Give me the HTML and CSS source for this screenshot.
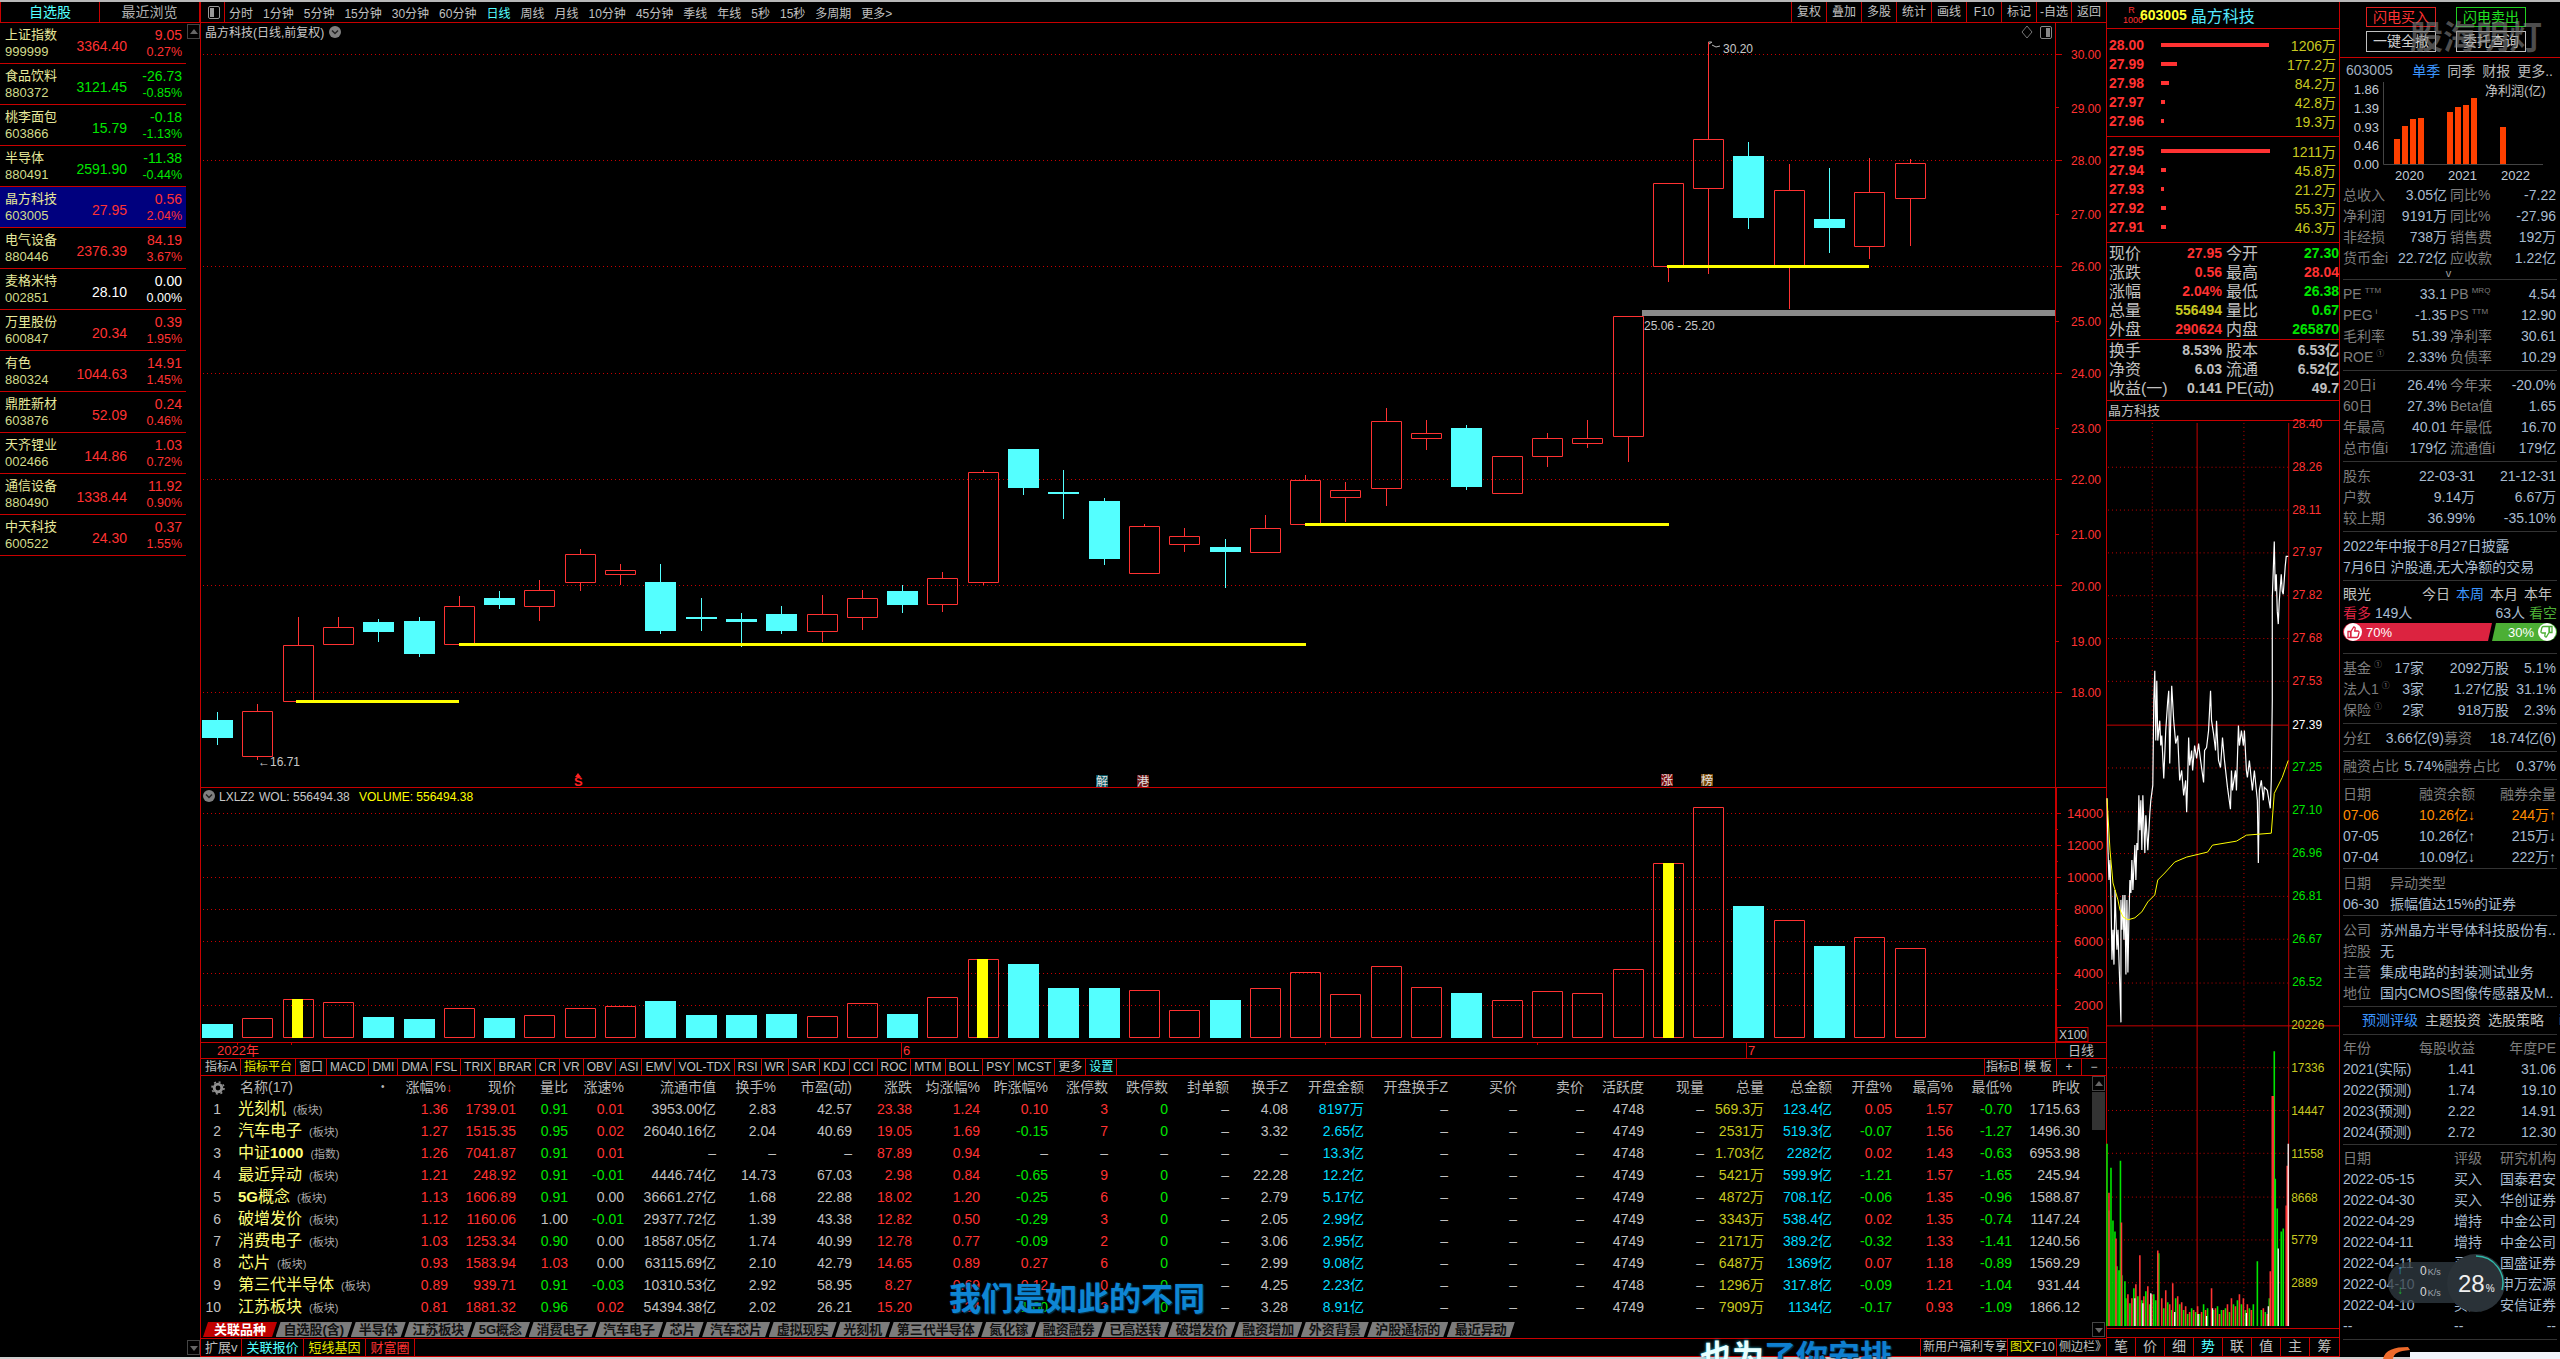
FILE: index.html
```html
<!DOCTYPE html>
<html lang="zh-CN">
<head>
<meta charset="utf-8">
<title>晶方科技</title>
<link rel="stylesheet" href="styles.css">
</head>
<body>
<div class="app">
  <div class="topline"></div>
  <div class="shell">
    <aside class="side">
      <div class="side-tabs"><div class="side-tab on">自选股</div><div class="side-tab">最近浏览</div></div>
      <div class="side-body">
        <div class="side-list">
          <div class="srow"><span class="nm">上证指数</span><span class="pr r">3364.40</span><span class="ch r">9.05</span><span class="cd">999999</span><span class="pc r">0.27%</span></div>
          <div class="srow"><span class="nm">食品饮料</span><span class="pr g">3121.45</span><span class="ch g">-26.73</span><span class="cd">880372</span><span class="pc g">-0.85%</span></div>
          <div class="srow"><span class="nm">桃李面包</span><span class="pr g">15.79</span><span class="ch g">-0.18</span><span class="cd">603866</span><span class="pc g">-1.13%</span></div>
          <div class="srow"><span class="nm">半导体</span><span class="pr g">2591.90</span><span class="ch g">-11.38</span><span class="cd">880491</span><span class="pc g">-0.44%</span></div>
          <div class="srow sel"><span class="nm">晶方科技</span><span class="pr r">27.95</span><span class="ch r">0.56</span><span class="cd">603005</span><span class="pc r">2.04%</span></div>
          <div class="srow"><span class="nm">电气设备</span><span class="pr r">2376.39</span><span class="ch r">84.19</span><span class="cd">880446</span><span class="pc r">3.67%</span></div>
          <div class="srow"><span class="nm">麦格米特</span><span class="pr wh">28.10</span><span class="ch wh">0.00</span><span class="cd">002851</span><span class="pc wh">0.00%</span></div>
          <div class="srow"><span class="nm">万里股份</span><span class="pr r">20.34</span><span class="ch r">0.39</span><span class="cd">600847</span><span class="pc r">1.95%</span></div>
          <div class="srow"><span class="nm">有色</span><span class="pr r">1044.63</span><span class="ch r">14.91</span><span class="cd">880324</span><span class="pc r">1.45%</span></div>
          <div class="srow"><span class="nm">鼎胜新材</span><span class="pr r">52.09</span><span class="ch r">0.24</span><span class="cd">603876</span><span class="pc r">0.46%</span></div>
          <div class="srow"><span class="nm">天齐锂业</span><span class="pr r">144.86</span><span class="ch r">1.03</span><span class="cd">002466</span><span class="pc r">0.72%</span></div>
          <div class="srow"><span class="nm">通信设备</span><span class="pr r">1338.44</span><span class="ch r">11.92</span><span class="cd">880490</span><span class="pc r">0.90%</span></div>
          <div class="srow"><span class="nm">中天科技</span><span class="pr r">24.30</span><span class="ch r">0.37</span><span class="cd">600522</span><span class="pc r">1.55%</span></div>
        </div>
        <div class="side-scroll"><div class="sbtn up"></div></div>
      </div>
    </aside>

    <main class="center">
      <nav class="tools">
        <div class="panel-ico"><svg width="12" height="13" viewBox="0 0 12 13"><rect x=".5" y=".5" width="11" height="12" rx="1.5" fill="none" stroke="#9a9a9a"/><rect x="2" y="2" width="4" height="9" fill="#9a9a9a"/></svg></div>
        <div class="periods"><span>分时</span><span>1分钟</span><span>5分钟</span><span>15分钟</span><span>30分钟</span><span>60分钟</span><span class="cy">日线</span><span>周线</span><span>月线</span><span>10分钟</span><span>45分钟</span><span>季线</span><span>年线</span><span>5秒</span><span>15秒</span><span>多周期</span><span>更多&gt;</span></div>
        <div class="actions"><span>复权</span><span>叠加</span><span>多股</span><span>统计</span><span>画线</span><span>F10</span><span>标记</span><span>-自选</span><span>返回</span></div>
      </nav>

      <svg class="kline" viewBox="201 23 1905 764">
        <path class="dot" d="M203 54.5H2055M203 160.5H2055M203 266.5H2055M203 373.5H2055M203 479.5H2055M203 585.5H2055M203 692.5H2055"/>
        <path class="axis" d="M2055.5 23V787M2055 54.5h7M2055 107.5h4M2055 160.5h7M2055 214.5h4M2055 266.5h7M2055 321.5h4M2055 373.5h7M2055 428.5h4M2055 479.5h7M2055 534.5h4M2055 585.5h7M2055 641.5h4M2055 692.5h7"/>
        <text class="lab" x="205" y="37">晶方科技(日线,前复权)</text>
        <circle cx="335" cy="32" r="6" fill="#808080"/><path d="M332 30.500l3 3 3-3" fill="none" stroke="#222" stroke-width="1.500"/>
        <path d="M2027 26l5 6-5 6-5-6z" fill="none" stroke="#777"/>
        <rect x="2040.500" y="26.500" width="11" height="12" rx="1.500" fill="none" stroke="#888"/><rect x="2046" y="28" width="4" height="9" fill="#888"/>
        <g class="ax">
          <text x="2071" y="59">30.00</text><text x="2071" y="113">29.00</text><text x="2071" y="165">28.00</text><text x="2071" y="219">27.00</text><text x="2071" y="271">26.00</text><text x="2071" y="326">25.00</text><text x="2071" y="378">24.00</text><text x="2071" y="433">23.00</text><text x="2071" y="484">22.00</text><text x="2071" y="539">21.00</text><text x="2071" y="591">20.00</text><text x="2071" y="646">19.00</text><text x="2071" y="697">18.00</text>
        </g>
        <path class="wick-u" d="M257.500 704V711M257.500 756V760M298.500 617V645M338.500 617V627M459.500 596V606M539.500 580V590M539.500 606V621M580.500 549V554M580.500 582V591M620.500 564V570M620.500 574V585M822.500 595V614M822.500 631V642M862.500 590V598M862.500 617V630M942.500 572V578M942.500 604V612M983.500 470V472M983.500 582V585M1144.500 524V526M1184.500 528V536M1184.500 544V552M1265.500 515V528M1305.500 475V480M1345.500 482V490M1345.500 497V522M1386.500 408V421M1386.500 488V506M1426.500 420V433M1426.500 438V450M1547.500 433V438M1547.500 456V467M1587.500 420V438M1587.500 443V448M1628.500 436V462M1668.500 266V282M1708.500 42V139M1708.500 188V274M1789.500 164V190M1789.500 266V309M1869.500 158V192M1869.500 246V259M1910.500 159V163M1910.500 198V246"/>
        <path class="wick-d" d="M217.500 712V745M378.500 619V642M419.500 617V657M499.500 591V609M660.500 564V634M701.500 598V631M741.500 613V647M781.500 606V634M902.500 585V613M1023.500 449V495M1063.500 470V519M1104.500 498V565M1225.500 539V588M1466.500 425V490M1748.500 142V229M1829.500 168V253"/>
        <path class="body-u" d="M242.500 711.500h30v45h-30zM283.500 645.500h30v56h-30zM323.500 627.500h30v17h-30zM444.500 606.500h30v38h-30zM524.500 590.500h30v16h-30zM565.500 554.500h30v28h-30zM605.500 570.500h30v4h-30zM807.500 614.500h30v17h-30zM847.500 598.500h30v19h-30zM927.500 578.500h30v26h-30zM968.500 472.500h30v110h-30zM1129.500 526.500h30v47h-30zM1169.500 536.500h30v8h-30zM1250.500 528.500h30v24h-30zM1290.500 480.500h30v44h-30zM1330.500 490.500h30v7h-30zM1371.500 421.500h30v67h-30zM1411.500 433.500h30v5h-30zM1492.500 456.500h30v37h-30zM1532.500 438.500h30v18h-30zM1572.500 438.500h30v5h-30zM1613.500 316.500h30v120h-30zM1653.500 183.500h30v83h-30zM1693.500 139.500h30v49h-30zM1774.500 190.500h30v76h-30zM1854.500 192.500h30v54h-30zM1895.500 163.500h30v35h-30z"/>
        <path class="body-d" d="M202 720h31v18h-31zM363 622h31v10h-31zM404 621h31v33h-31zM484 598h31v7h-31zM645 582h31v49h-31zM686 617h31v2h-31zM726 619h31v3h-31zM766 614h31v17h-31zM887 591h31v14h-31zM1008 449h31v39h-31zM1048 492h31v2h-31zM1089 501h31v58h-31zM1210 547h31v5h-31zM1451 428h31v59h-31zM1733 156h31v62h-31zM1814 219h31v9h-31z"/>
        <path class="hl" d="M296 701.500H459M459 644.500H1306M1305 524.500H1669M1667 266.500H1869"/>
        <rect x="1642" y="310" width="413" height="6" fill="#8a8a8a"/>
        <text class="lab" x="1644" y="330">25.06 - 25.20</text>
        <path d="M1708.500 42h3M1709 44l3-2M1712 45l4 2 4-1" fill="none" stroke="#bbb"/>
        <text class="lab" x="1723" y="53">30.20</text>
        <text class="lab" x="258" y="766">←16.71</text>
        <g class="marks">
          <text class="mk-r" x="574" y="786">S</text><path d="M578 773l-3 4h6z" fill="#f22"/>
          <rect x="1096" y="775" width="12" height="12" fill="#0b5660"/><text class="mk" x="1096" y="785.500">解</text>
          <rect x="1137" y="775" width="12" height="12" fill="#6b1a1a"/><text class="mk" x="1137" y="785.500">港</text>
          <rect x="1661" y="774" width="12" height="12" fill="#7c0c0c"/><text class="mk" x="1661" y="784.500">涨</text>
          <rect x="1701" y="774" width="12" height="12" fill="#7a4a08"/><text class="mk" x="1701" y="784.500">榜</text>
        </g>
      </svg>

      <svg class="volume" viewBox="201 788 1905 254">
        <path class="dot" d="M203 813.500H2055M203 845.500H2055M203 877.500H2055M203 909.500H2055M203 941.500H2055M203 973.500H2055M203 1005.500H2055"/>
        <path class="axis" d="M2055.500 788V1042M2056.500 788V1042M2055 813.500h6M2055 829.500h3M2055 845.500h6M2055 861.500h3M2055 877.500h6M2055 893.500h3M2055 909.500h6M2055 925.500h3M2055 941.500h6M2055 957.500h3M2055 973.500h6M2055 989.500h3M2055 1005.500h6"/>
        <circle cx="209" cy="796" r="6" fill="#808080"/><path d="M206 794.500l3 3 3-3" fill="none" stroke="#222" stroke-width="1.500"/>
        <text class="lab" x="219" y="801">LXLZ2</text><text class="lab" x="259" y="801">WOL: 556494.38</text><text class="lab-y" x="359" y="801">VOLUME: 556494.38</text>
        <g class="ax2">
          <text x="2067" y="818">14000</text><text x="2067" y="850">12000</text><text x="2067" y="882">10000</text><text x="2074" y="914">8000</text><text x="2074" y="946">6000</text><text x="2074" y="978">4000</text><text x="2074" y="1010">2000</text>
        </g>
        <path class="body-u" d="M242.500 1018.500h30v19h-30zM283.500 999.500h30v38h-30zM323.500 1002.500h30v35h-30zM444.500 1008.500h30v29h-30zM524.500 1015.500h30v22h-30zM565.500 1008.500h30v29h-30zM605.500 1006.500h30v31h-30zM807.500 1016.500h30v21h-30zM847.500 1003.500h30v34h-30zM927.500 997.500h30v40h-30zM968.500 959.500h30v78h-30zM1129.500 990.500h30v47h-30zM1169.500 1010.500h30v27h-30zM1250.500 988.500h30v49h-30zM1290.500 972.500h30v65h-30zM1330.500 994.500h30v43h-30zM1371.500 966.500h30v71h-30zM1411.500 987.500h30v50h-30zM1492.500 1000.500h30v37h-30zM1532.500 991.500h30v46h-30zM1572.500 993.500h30v44h-30zM1613.500 969.500h30v68h-30zM1653.500 863.500h30v174h-30zM1693.500 807.500h30v230h-30zM1774.500 920.500h30v117h-30zM1854.500 937.500h30v100h-30zM1895.500 948.500h30v89h-30z"/>
        <path class="body-d" d="M202 1024h31v14h-31zM363 1017h31v21h-31zM404 1019h31v19h-31zM484 1018h31v20h-31zM645 1001h31v37h-31zM686 1015h31v23h-31zM726 1015h31v23h-31zM766 1014h31v24h-31zM887 1014h31v24h-31zM1008 964h31v74h-31zM1048 988h31v50h-31zM1089 988h31v50h-31zM1210 1000h31v38h-31zM1451 993h31v45h-31zM1733 906h31v132h-31zM1814 946h31v92h-31z"/>
        <path class="yl" d="M292 999h11v39h-11zM977 959h11v79h-11zM1663 863h11v175h-11z"/>
        <rect class="x100" x="2057" y="1027.500" width="31" height="14"/><text class="lab" x="2059" y="1039">X100</text>
      </svg>

      <div class="dates">
        <svg class="dates-svg" viewBox="201 1043 1854 15">
          <path class="axis" d="M901.500 1043v15M1746.500 1043v15M237.500 1043v2M291.500 1043v2M1325.500 1043v2M1537.500 1043v2"/>
          <text class="date" x="217" y="1055">2022年</text><text class="date" x="903" y="1055">6</text><text class="date" x="1748" y="1055">7</text>
        </svg>
        <div class="dline">日线</div>
      </div>

      <div class="inds">
        <span>指标A</span><span class="yw">指标平台</span><span>窗口</span><span>MACD</span><span>DMI</span><span>DMA</span><span>FSL</span><span>TRIX</span><span>BRAR</span><span>CR</span><span>VR</span><span>OBV</span><span>ASI</span><span>EMV</span><span>VOL-TDX</span><span>RSI</span><span>WR</span><span>SAR</span><span>KDJ</span><span>CCI</span><span>ROC</span><span>MTM</span><span>BOLL</span><span>PSY</span><span>MCST</span><span>更多</span><span class="cy">设置</span>
        <div class="ind-right"><span class="b1">指标B</span><span class="b2">模 板</span><span class="b3">+</span><span class="b3">−</span></div>
      </div>

      <div class="tbl">
        <div class="rows">
          <div class="tr th"><span class="gear"><svg width="14" height="14" viewBox="0 0 14 14"><circle cx="7" cy="7" r="3.800" fill="none" stroke="#8f8f8f" stroke-width="2.800"/><circle cx="7" cy="7" r="6" fill="none" stroke="#8f8f8f" stroke-width="1.600" stroke-dasharray="2 2.700"/></svg></span><span class="n hname">名称(17)<i class="dotm">•</i></span><span>涨幅%<i class="arr">↓</i></span><span>现价</span><span>量比</span><span>涨速%</span><span>流通市值</span><span>换手%</span><span>市盈(动)</span><span>涨跌</span><span>均涨幅%</span><span>昨涨幅%</span><span>涨停数</span><span>跌停数</span><span>封单额</span><span>换手Z</span><span>开盘金额</span><span>开盘换手Z</span><span>买价</span><span>卖价</span><span>活跃度</span><span>现量</span><span>总量</span><span>总金额</span><span>开盘%</span><span>最高%</span><span>最低%</span><span>昨收</span></div>
          <div class="tr"><span>1</span><span class="n">光刻机<small>(板块)</small></span><span class="r">1.36</span><span class="r">1739.01</span><span class="g">0.91</span><span class="r">0.01</span><span>3953.00亿</span><span>2.83</span><span>42.57</span><span class="r">23.38</span><span class="r">1.24</span><span class="r">0.10</span><span class="r">3</span><span class="g">0</span><span>–</span><span>4.08</span><span class="c">8197万</span><span>–</span><span>–</span><span>–</span><span>4748</span><span>–</span><span class="y">569.3万</span><span class="c">123.4亿</span><span class="r">0.05</span><span class="r">1.57</span><span class="g">-0.70</span><span>1715.63</span></div>
          <div class="tr"><span>2</span><span class="n">汽车电子<small>(板块)</small></span><span class="r">1.27</span><span class="r">1515.35</span><span class="g">0.95</span><span class="r">0.02</span><span>26040.16亿</span><span>2.04</span><span>40.69</span><span class="r">19.05</span><span class="r">1.69</span><span class="g">-0.15</span><span class="r">7</span><span class="g">0</span><span>–</span><span>3.32</span><span class="c">2.65亿</span><span>–</span><span>–</span><span>–</span><span>4749</span><span>–</span><span class="y">2531万</span><span class="c">519.3亿</span><span class="g">-0.07</span><span class="r">1.56</span><span class="g">-1.27</span><span>1496.30</span></div>
          <div class="tr"><span>3</span><span class="n">中证<b>1000</b><small>(指数)</small></span><span class="r">1.26</span><span class="r">7041.87</span><span class="g">0.91</span><span class="r">0.01</span><span>–</span><span>–</span><span>–</span><span class="r">87.89</span><span class="r">0.94</span><span>–</span><span>–</span><span>–</span><span>–</span><span>–</span><span class="c">13.3亿</span><span>–</span><span>–</span><span>–</span><span>4748</span><span>–</span><span class="y">1.703亿</span><span class="c">2282亿</span><span class="r">0.02</span><span class="r">1.43</span><span class="g">-0.63</span><span>6953.98</span></div>
          <div class="tr"><span>4</span><span class="n">最近异动<small>(板块)</small></span><span class="r">1.21</span><span class="r">248.92</span><span class="g">0.91</span><span class="g">-0.01</span><span>4446.74亿</span><span>14.73</span><span>67.03</span><span class="r">2.98</span><span class="r">0.84</span><span class="g">-0.65</span><span class="r">9</span><span class="g">0</span><span>–</span><span>22.28</span><span class="c">12.2亿</span><span>–</span><span>–</span><span>–</span><span>4749</span><span>–</span><span class="y">5421万</span><span class="c">599.9亿</span><span class="g">-1.21</span><span class="r">1.57</span><span class="g">-1.65</span><span>245.94</span></div>
          <div class="tr"><span>5</span><span class="n"><b>5G</b>概念<small>(板块)</small></span><span class="r">1.13</span><span class="r">1606.89</span><span class="g">0.91</span><span>0.00</span><span>36661.27亿</span><span>1.68</span><span>22.88</span><span class="r">18.02</span><span class="r">1.20</span><span class="g">-0.25</span><span class="r">6</span><span class="g">0</span><span>–</span><span>2.79</span><span class="c">5.17亿</span><span>–</span><span>–</span><span>–</span><span>4749</span><span>–</span><span class="y">4872万</span><span class="c">708.1亿</span><span class="g">-0.06</span><span class="r">1.35</span><span class="g">-0.96</span><span>1588.87</span></div>
          <div class="tr"><span>6</span><span class="n">破增发价<small>(板块)</small></span><span class="r">1.12</span><span class="r">1160.06</span><span>1.00</span><span class="g">-0.01</span><span>29377.72亿</span><span>1.39</span><span>43.38</span><span class="r">12.82</span><span class="r">0.50</span><span class="g">-0.29</span><span class="r">3</span><span class="g">0</span><span>–</span><span>2.05</span><span class="c">2.99亿</span><span>–</span><span>–</span><span>–</span><span>4749</span><span>–</span><span class="y">3343万</span><span class="c">538.4亿</span><span class="r">0.02</span><span class="r">1.35</span><span class="g">-0.74</span><span>1147.24</span></div>
          <div class="tr"><span>7</span><span class="n">消费电子<small>(板块)</small></span><span class="r">1.03</span><span class="r">1253.34</span><span class="g">0.90</span><span>0.00</span><span>18587.05亿</span><span>1.74</span><span>40.99</span><span class="r">12.78</span><span class="r">0.77</span><span class="g">-0.09</span><span class="r">2</span><span class="g">0</span><span>–</span><span>3.06</span><span class="c">2.95亿</span><span>–</span><span>–</span><span>–</span><span>4749</span><span>–</span><span class="y">2171万</span><span class="c">389.2亿</span><span class="g">-0.32</span><span class="r">1.33</span><span class="g">-1.41</span><span>1240.56</span></div>
          <div class="tr"><span>8</span><span class="n">芯片<small>(板块)</small></span><span class="r">0.93</span><span class="r">1583.94</span><span class="r">1.03</span><span>0.00</span><span>63115.69亿</span><span>2.10</span><span>42.79</span><span class="r">14.65</span><span class="r">0.89</span><span class="r">0.27</span><span class="r">6</span><span class="g">0</span><span>–</span><span>2.99</span><span class="c">9.08亿</span><span>–</span><span>–</span><span>–</span><span>4749</span><span>–</span><span class="y">6487万</span><span class="c">1369亿</span><span class="r">0.07</span><span class="r">1.18</span><span class="g">-0.89</span><span>1569.29</span></div>
          <div class="tr"><span>9</span><span class="n">第三代半导体<small>(板块)</small></span><span class="r">0.89</span><span class="r">939.71</span><span class="g">0.91</span><span class="g">-0.03</span><span>10310.53亿</span><span>2.92</span><span>58.95</span><span class="r">8.27</span><span class="r">0.69</span><span class="r">0.12</span><span class="r">0</span><span class="g">0</span><span>–</span><span>4.25</span><span class="c">2.23亿</span><span>–</span><span>–</span><span>–</span><span>4748</span><span>–</span><span class="y">1296万</span><span class="c">317.8亿</span><span class="g">-0.09</span><span class="r">1.21</span><span class="g">-1.04</span><span>931.44</span></div>
          <div class="tr"><span>10</span><span class="n">江苏板块<small>(板块)</small></span><span class="r">0.81</span><span class="r">1881.32</span><span class="g">0.96</span><span class="r">0.02</span><span>54394.38亿</span><span>2.02</span><span>26.21</span><span class="r">15.20</span><span class="r">0.34</span><span class="g">-1.00</span><span class="r">3</span><span class="g">0</span><span>–</span><span>3.28</span><span class="c">8.91亿</span><span>–</span><span>–</span><span>–</span><span>4749</span><span>–</span><span class="y">7909万</span><span class="c">1134亿</span><span class="g">-0.17</span><span class="r">0.93</span><span class="g">-1.09</span><span>1866.12</span></div>
        </div>
        <div class="tscroll"><div class="sbtn up"></div><div class="thumb"></div><div class="sbtn down"></div></div>
      </div>

      <div class="ftabs"><span class="on">关联品种</span><span>自选股(含)</span><span>半导体</span><span>江苏板块</span><span>5G概念</span><span>消费电子</span><span>汽车电子</span><span>芯片</span><span>汽车芯片</span><span>虚拟现实</span><span>光刻机</span><span>第三代半导体</span><span>氮化镓</span><span>融资融券</span><span>已高送转</span><span>破增发价</span><span>融资增加</span><span>外资背景</span><span>沪股通标的</span><span>最近异动</span></div>

      <div class="foot">
        <div class="foot-left"><span class="cy">关联报价</span><span class="yw">短线基因</span><span class="rd">财富圈</span></div>
        <div class="foot-right"><span class="promo">新用户福利专享</span><span class="f10"><em>图文</em>F10</span><span class="sidebtn">侧边栏》</span></div>
      </div>
    </main>

    <section class="quote">
      <header class="qhead"><span class="rmark">R<br>1000</span><b>603005</b><span class="qname">晶方科技</span></header>
      <div class="book asks">
        <div class="brow"><b>28.00</b><i class="bar" style="width:108px"></i><span>1206万</span></div>
        <div class="brow"><b>27.99</b><i class="bar" style="width:16px"></i><span>177.2万</span></div>
        <div class="brow"><b>27.98</b><i class="bar" style="width:8px"></i><span>84.2万</span></div>
        <div class="brow"><b>27.97</b><i class="bar" style="width:4px"></i><span>42.8万</span></div>
        <div class="brow"><b>27.96</b><i class="bar" style="width:3px"></i><span>19.3万</span></div>
      </div>
      <div class="book bids">
        <div class="brow"><b>27.95</b><i class="bar" style="width:109px"></i><span>1211万</span></div>
        <div class="brow"><b>27.94</b><i class="bar" style="width:5px"></i><span>45.8万</span></div>
        <div class="brow"><b>27.93</b><i class="bar" style="width:3px"></i><span>21.2万</span></div>
        <div class="brow"><b>27.92</b><i class="bar" style="width:5px"></i><span>55.3万</span></div>
        <div class="brow"><b>27.91</b><i class="bar" style="width:5px"></i><span>46.3万</span></div>
      </div>
      <div class="stats s5">
        <div class="qrow"><span>现价</span><b class="r">27.95</b><span>今开</span><b class="g">27.30</b></div>
        <div class="qrow"><span>涨跌</span><b class="r">0.56</b><span>最高</span><b class="r">28.04</b></div>
        <div class="qrow"><span>涨幅</span><b class="r">2.04%</b><span>最低</span><b class="g">26.38</b></div>
        <div class="qrow"><span>总量</span><b class="y">556494</b><span>量比</span><b class="g">0.67</b></div>
        <div class="qrow"><span>外盘</span><b class="r">290624</b><span>内盘</span><b class="g">265870</b></div>
      </div>
      <div class="stats s3">
        <div class="qrow"><span>换手</span><b>8.53%</b><span>股本</span><b>6.53亿</b></div>
        <div class="qrow"><span>净资</span><b>6.03</b><span>流通</span><b>6.52亿</b></div>
        <div class="qrow"><span>收益(一)</span><b>0.141</b><span>PE(动)</span><b>49.7</b></div>
      </div>
      <div class="ttitle">晶方科技</div>
      <svg class="tline" viewBox="2107 421 233 907">
        <path class="dot" d="M2108 465.500H2289M2108 508.500H2289M2108 551.500H2289M2108 594.500H2289M2108 637.500H2289M2108 680.500H2289M2108 767.500H2289M2108 811.500H2289M2108 853.500H2289M2108 896.500H2289M2108 939.500H2289M2108 983.500H2289M2108 1068.500H2289M2108 1111.500H2289M2108 1154.500H2289M2108 1198.500H2289M2108 1241.500H2289M2108 1284.500H2289"/>
        <path class="dot" d="M2152.500 421V1328M2244.500 421V1328"/>
        <path class="axis" d="M2197.500 421V1328M2289.500 421V1328M2107 724.500H2289M2107 1026.500H2340"/>
        <g class="ax">
          <text x="2293" y="426">28.40</text><text x="2293" y="469">28.26</text><text x="2293" y="512">28.11</text><text x="2293" y="555">27.97</text><text x="2293" y="598">27.82</text><text x="2293" y="641">27.68</text><text x="2293" y="684">27.53</text>
        </g>
        <text class="ax-w" x="2293" y="728">27.39</text>
        <g class="ax-g">
          <text x="2293" y="771">27.25</text><text x="2293" y="814">27.10</text><text x="2293" y="857">26.96</text><text x="2293" y="900">26.81</text><text x="2293" y="943">26.67</text><text x="2293" y="986">26.52</text>
        </g>
        <g class="ax-y">
          <text x="2292" y="1030">20226</text><text x="2292" y="1073">17336</text><text x="2292" y="1116">14447</text><text x="2292" y="1159">11558</text><text x="2292" y="1203">8668</text><text x="2292" y="1246">5779</text><text x="2292" y="1289">2889</text>
        </g>
        <polyline class="price" points="2107,798 2108,850 2109,880 2110,860 2111,900 2112,960 2113,930 2114,965 2115,890 2116,920 2117,950 2118,930 2119,960 2120,990 2121,1023 2121,900 2122,930 2123,895 2124,940 2125,895 2126,975 2127,900 2128,973 2129,920 2130,880 2131,893 2132,860 2133,890 2135,845 2136,880 2137,843 2138,850 2139,795 2140,830 2141,800 2142,850 2143,795 2145,853 2146,815 2148,850 2150,813 2151,800 2153,785 2154,700 2155,670 2156,740 2157,680 2158,740 2160,720 2161,745 2162,735 2164,778 2166,730 2168,700 2169,690 2170,763 2171,720 2172,685 2174,720 2176,743 2178,735 2180,780 2182,770 2184,795 2186,780 2187,812 2188,780 2189,737 2190,765 2192,750 2193,770 2195,745 2197,758 2199,743 2201,760 2204,782 2205,750 2207,747 2209,730 2211,690 2212,720 2214,733 2216,750 2217,720 2219,760 2221,767 2223,737 2225,760 2228,787 2231,809 2232,770 2233,790 2236,770 2237,790 2239,725 2240,745 2242,730 2244,745 2245,730 2247,770 2248,777 2250,760 2253,790 2255,770 2258,800 2259,863 2260,790 2262,780 2264,800 2265,787 2268,790 2271,808 2272,780 2273,700 2273,597 2275,540 2276,590 2277,573 2278,610 2279,623 2280,600 2282,573 2283,590 2284,593 2286,565 2287,555 2289,555"/>
        <polyline class="avg" points="2107,798 2110,850 2113,883 2118,900 2120,910 2123,917 2128,920 2135,918 2142,912 2148,902 2155,895 2158,880 2165,873 2175,862 2187,857 2208,852 2213,845 2237,841 2247,835 2272,833 2275,793 2283,777 2289,760"/>
        <path class="vg" d="M2107 1328V1145M2109 1328V1212M2111 1328V1169M2113 1328V1222M2115 1328V1233M2117 1328V1268M2119 1328V1272M2120.500 1328V1162M2122 1328V1277M2125 1328V1283M2126 1328V1300M2130 1328V1305M2134 1328V1290M2138 1328V1298M2142 1328V1302M2146 1328V1293M2150 1328V1306M2154 1328V1296M2156 1328V1302M2159 1328V1255M2164 1328V1310M2168 1328V1304M2172 1328V1312M2176 1328V1300M2180 1328V1306M2184 1328V1312M2188 1328V1316M2192 1328V1310M2196 1328V1314M2200 1328V1316M2204 1328V1306M2208 1328V1310M2214 1328V1312M2218 1328V1308M2222 1328V1312M2226 1328V1310M2230 1328V1314M2234 1328V1306M2238 1328V1302M2242 1328V1306M2246 1328V1312M2250 1328V1310M2254 1328V1306M2258 1328V1263M2262 1328V1312M2266 1328V1314M2270 1328V1300M2275 1328V1052M2276 1328V1180M2278 1328V1210M2282 1328V1233M2284 1328V1230"/>
        <path class="vr" d="M2109 1328V1194M2116 1328V1240M2121.500 1328V1224M2128 1328V1296M2132 1328V1300M2136 1328V1286M2140 1328V1257M2144 1328V1298M2148 1328V1288M2152 1328V1296M2158 1328V1252M2162 1328V1300M2166 1328V1292M2170 1328V1306M2173 1328V1285M2178 1328V1298M2182 1328V1304M2186 1328V1308M2190 1328V1314M2194 1328V1312M2198 1328V1308M2202 1328V1314M2206 1328V1312M2212 1328V1290M2216 1328V1310M2220 1328V1316M2224 1328V1312M2228 1328V1306M2232 1328V1300M2236 1328V1308M2240 1328V1296M2244 1328V1300M2248 1328V1306M2252 1328V1312M2264 1328V1310M2268 1328V1316M2271 1328V1273M2273 1328V1097M2274 1328V1097M2287 1328V1207M2288 1328V1167"/>
        <path class="vw" d="M2135 1328V1300M2143 1328V1305M2151 1328V1295M2175 1328V1314M2198.500 1328V1316M2207 1328V1318M2213 1328V1310M2247 1328V1315M2269 1328V1308M2279 1328V1250M2289 1328V1145"/>
      </svg>
      <div class="tgap"></div>
      <div class="ttabs"><span>笔</span><span>价</span><span>细</span><span class="cy">势</span><span>联</span><span>值</span><span>主</span><span>筹</span></div>
    </section>

    <section class="info">
      <div class="trade">
        <span class="tb buy">闪电买入</span><span class="tb sell">闪电卖出</span><span class="tb neu">一键全撤</span><span class="tb neu">委托查询</span>
      </div>
      <div class="fin">
        <div class="fhead"><span class="fcode">603005</span><span class="blue">单季</span><span>同季</span><span>财报</span><span>更多..</span></div>
        <svg class="fchart" viewBox="2341 80 219 101">
          <g class="fa"><text x="2380" y="94">1.86</text><text x="2380" y="113">1.39</text><text x="2380" y="132">0.93</text><text x="2380" y="150">0.46</text><text x="2380" y="169">0.00</text></g>
          <text class="ft" x="2486" y="95">净利润(亿)</text>
          <path class="fax" d="M2384.500 82V164.500H2544"/>
          <path class="fb" d="M2395 139h6v25h-6zM2403 126h6v38h-6zM2411 119h6v45h-6zM2419 118h6v46h-6zM2448 112h6v52h-6zM2456 107h6v57h-6zM2464 105h6v59h-6zM2472 98h6v66h-6zM2501 127h6v37h-6z"/>
          <g class="fy"><text x="2396" y="180">2020</text><text x="2449" y="180">2021</text><text x="2502" y="180">2022</text></g>
        </svg>
      </div>
      <div class="sec s1">
        <div class="kv"><span class="l">总收入</span><span class="v">3.05亿</span><span class="l l2">同比%</span><span class="v">-7.22</span></div>
        <div class="kv"><span class="l">净利润</span><span class="v">9191万</span><span class="l l2">同比%</span><span class="v">-27.96</span></div>
        <div class="kv"><span class="l">非经损</span><span class="v">738万</span><span class="l l2">销售费</span><span class="v">192万</span></div>
        <div class="kv"><span class="l">货币金i</span><span class="v">22.72亿</span><span class="l l2">应收款</span><span class="v">1.22亿</span></div>
        <div class="chev">v</div>
      </div>
      <div class="sec">
        <div class="kv"><span class="l">PE<sup>TTM</sup></span><span class="v">33.1</span><span class="l l2">PB<sup>MRQ</sup></span><span class="v">4.54</span></div>
        <div class="kv"><span class="l">PEG<sup>i</sup></span><span class="v">-1.35</span><span class="l l2">PS<sup>TTM</sup></span><span class="v">12.90</span></div>
        <div class="kv"><span class="l">毛利率</span><span class="v">51.39</span><span class="l l2">净利率</span><span class="v">30.61</span></div>
        <div class="kv"><span class="l">ROE<sup>①</sup></span><span class="v">2.33%</span><span class="l l2">负债率</span><span class="v">10.29</span></div>
      </div>
      <div class="sec">
        <div class="kv"><span class="l">20日i</span><span class="v">26.4%</span><span class="l l2">今年来</span><span class="v">-20.0%</span></div>
        <div class="kv"><span class="l">60日</span><span class="v">27.3%</span><span class="l l2">Beta值</span><span class="v">1.65</span></div>
        <div class="kv"><span class="l">年最高</span><span class="v">40.01</span><span class="l l2">年最低</span><span class="v">16.70</span></div>
        <div class="kv"><span class="l">总市值i</span><span class="v">179亿</span><span class="l l2">流通值i</span><span class="v">179亿</span></div>
      </div>
      <div class="sec">
        <div class="row3"><span class="l">股东</span><span class="v">22-03-31</span><span class="v">21-12-31</span></div>
        <div class="row3"><span class="l">户数</span><span class="v">9.14万</span><span class="v">6.67万</span></div>
        <div class="row3"><span class="l">较上期</span><span class="v">36.99%</span><span class="v">-35.10%</span></div>
      </div>
      <div class="sec txt">
        <div>2022年中报于8月27日披露</div>
        <div>7月6日 沪股通,无大净额的交易</div>
      </div>
      <div class="sec vision">
        <div class="vhead"><span>眼光</span><span class="vtabs"><span>今日</span><span class="blue">本周</span><span>本月</span><span>本年</span></span></div>
        <div class="vcount"><span><em class="bull">看多</em> 149人</span><span>63人 <em class="bear">看空</em></span></div>
        <div class="vbar">
          <div class="vred">
            <svg class="thumb-ico" width="20" height="20" viewBox="0 0 20 20"><circle cx="10" cy="10" r="9" fill="#fff"/><path d="M5 9.500h2.500v6H5zM8 15.500h5.500c1 0 1.500-.7 1.700-1.500l.8-3.500c.2-1-.5-1.500-1.300-1.500h-3l.5-2.500c.2-1.500-1.500-2-2-.7L8 9.500z" fill="none" stroke="#dc2340" stroke-width="1.300"/></svg>
            70%
          </div>
          <div class="vgreen">
            30%
            <svg class="thumb-ico" width="20" height="20" viewBox="0 0 20 20"><circle cx="10" cy="10" r="9" fill="#fff"/><path d="M15 10.500h-2.500v-6H15zM12 4.500H6.500c-1 0-1.500.7-1.700 1.500L4 9.500c-.2 1 .5 1.500 1.300 1.500h3l-.5 2.500c-.2 1.500 1.500 2 2 .7L12 10.500z" fill="none" stroke="#4caf35" stroke-width="1.300"/></svg>
          </div>
        </div>
      </div>
      <div class="sec">
        <div class="row4"><span class="l">基金<sup>①</sup></span><span class="v">17家</span><span class="v">2092万股</span><span class="v">5.1%</span></div>
        <div class="row4"><span class="l">法人1<sup>①</sup></span><span class="v">3家</span><span class="v">1.27亿股</span><span class="v">31.1%</span></div>
        <div class="row4"><span class="l">保险<sup>①</sup></span><span class="v">2家</span><span class="v">918万股</span><span class="v">2.3%</span></div>
      </div>
      <div class="sec"><div class="kv wide"><span class="l">分红</span><span class="v">3.66亿(9)</span><span class="l l3">募资</span><span class="v">18.74亿(6)</span></div></div>
      <div class="sec"><div class="kv wide"><span class="l">融资占比</span><span class="v">5.74%</span><span class="l l3">融券占比</span><span class="v">0.37%</span></div></div>
      <div class="sec tight">
        <div class="row3"><span class="l">日期</span><span class="l v">融资余额</span><span class="l v">融券余量</span></div>
        <div class="row3 hot"><span>07-06</span><span class="v">10.26亿↓</span><span class="v">244万↑</span></div>
        <div class="row3"><span class="vv">07-05</span><span class="v">10.26亿↑</span><span class="v">215万↓</span></div>
        <div class="row3"><span class="vv">07-04</span><span class="v">10.09亿↓</span><span class="v">222万↑</span></div>
      </div>
      <div class="sec tight">
        <div class="row2"><span class="l">日期</span><span class="l">异动类型</span></div>
        <div class="row2"><span class="vv">06-30</span><span class="vv">振幅值达15%的证券</span></div>
      </div>
      <div class="sec">
        <div class="row2 r2w"><span class="l">公司</span><span class="vv">苏州晶方半导体科技股份有..</span></div>
        <div class="row2 r2w"><span class="l">控股</span><span class="vv">无</span></div>
        <div class="row2 r2w"><span class="l">主营</span><span class="vv">集成电路的封装测试业务</span></div>
        <div class="row2 r2w"><span class="l">地位</span><span class="vv">国内CMOS图像传感器及M..</span></div>
      </div>
      <div class="sec sectabs"><span class="blue">预测评级</span><span>主题投资</span><span>选股策略</span><span class="itag">i</span></div>
      <div class="sec fore">
        <div class="row3"><span class="l">年份</span><span class="l v">每股收益</span><span class="l v">年度PE</span></div>
        <div class="row3"><span class="vv">2021(实际)</span><span class="v">1.41</span><span class="v">31.06</span></div>
        <div class="row3"><span class="vv">2022(预测)</span><span class="v">1.74</span><span class="v">19.10</span></div>
        <div class="row3"><span class="vv">2023(预测)</span><span class="v">2.22</span><span class="v">14.91</span></div>
        <div class="row3"><span class="vv">2024(预测)</span><span class="v">2.72</span><span class="v">12.30</span></div>
      </div>
      <div class="sec fore last">
        <div class="rate"><span class="l">日期</span><span class="l">评级</span><span class="l">研究机构</span></div>
        <div class="rate"><span class="vv">2022-05-15</span><span class="vv">买入</span><span class="vv">国泰君安</span></div>
        <div class="rate"><span class="vv">2022-04-30</span><span class="vv">买入</span><span class="vv">华创证券</span></div>
        <div class="rate"><span class="vv">2022-04-29</span><span class="vv">增持</span><span class="vv">中金公司</span></div>
        <div class="rate"><span class="vv">2022-04-11</span><span class="vv">增持</span><span class="vv">中金公司</span></div>
        <div class="rate"><span class="vv">2022-04-11</span><span class="vv">买入</span><span class="vv">国盛证券</span></div>
        <div class="rate"><span class="vv">2022-04-10</span><span class="vv">买入</span><span class="vv">申万宏源</span></div>
        <div class="rate"><span class="vv">2022-04-10</span><span class="vv">买入</span><span class="vv">安信证券</span></div>
        <div class="rate"><span class="vv">--</span><span class="vv">--</span><span class="vv dashes">--</span></div>
      </div>
    </section>
  </div>
  <div class="botline"></div>

  <div class="expand"><span class="sbtn down"></span><span class="extxt">扩展v</span></div>
  <div class="watermark">股海明灯</div>
  <div class="sub sub1">我们是如此的不同</div>
  <div class="sub sub2"><span class="wt">也为</span>了你安排</div>
  <div class="net">
    <div class="net-pill"><span class="nu">↑</span><span class="nv">0<small>K/s</small></span><span class="nd">↓</span><span class="nv nv2">0<small>K/s</small></span></div>
    <svg class="net-dial" width="60" height="60" viewBox="0 0 60 60"><circle cx="30" cy="30" r="29" fill="#2a3238"/><path d="M30 3A27 27 0 0 1 56 37" fill="none" stroke="#2fb8a8" stroke-width="1.500"/><text class="dial" x="12" y="39">28<tspan class="dialp" dx="1">%</tspan></text></svg>
  </div>
  <div class="ad"><svg width="28" height="12" viewBox="0 0 28 12"><path d="M1 12C3 3 12 0 26 0l2 3C16 4 12 6 11 12z" fill="#ee6a2a"/></svg><div class="adbar"></div></div>
</div>
</body>
</html>
```
FILE: styles.css
```css
*{box-sizing:border-box}
html,body{margin:0;padding:0;background:#000}
body{width:2560px;height:1359px;overflow:hidden;font-family:"Liberation Sans","Noto Sans CJK SC",sans-serif;color:#c0c0c0;font-size:14px}
.app{position:relative;width:2560px;height:1359px;display:flex;flex-direction:column;overflow:hidden;background:#000}
.topline{height:2px;background:#b8b8b8;flex:none}
.botline{height:2px;background:#cfcfcf;flex:none}
.shell{display:flex;height:1355px;flex:none}
.r{color:#ff3232}.g{color:#00e600}.y{color:#c8c820}.c{color:#00dcff}.wh{color:#fff}
.cy{color:#54ffff}.yw{color:#e8e800}.rd{color:#ff3232}.blue{color:#3c96ff}
em{font-style:normal}

/* sidebar */
.side{width:200px;flex:none;display:flex;flex-direction:column}
.side-tabs{display:flex;height:21px;border-bottom:1px solid #c80000}
.side-tab{width:100px;text-align:center;line-height:20px;font-size:14px;color:#b0b0b0;border-right:1px solid #c80000}
.side-tab.on{color:#54ffff}
.side-tab:first-child{border-left:1px solid #c80000}
.side-body{display:flex;flex:1}
.side-list{width:186px;flex:none}
.side-scroll{flex:1;padding:1px 0 0 1px}
.sbtn{display:block;width:13px;height:15px;border:1px solid #444;position:relative}
.sbtn::after{content:"";position:absolute;left:2px;border:4px solid transparent}
.sbtn.up::after{top:0;border-bottom:5px solid #666}
.sbtn.down::after{top:5px;border-top:5px solid #666}
.srow{height:41px;border-bottom:1px solid #c80000;padding:3px 4px 0 5px;display:grid;grid-template-columns:62px 60px 55px;grid-template-rows:18px 16px;line-height:16px}
.srow.sel{background:#00007e}
.nm{color:#e6e89a;font-size:13px;grid-column:1;grid-row:1;white-space:nowrap;line-height:18px}
.cd{color:#d2dc8c;font-size:13px;grid-column:1;grid-row:2}
.pr{font-size:14px;grid-column:2;grid-row:1/3;text-align:right;padding-top:12px}
.ch{font-size:14px;grid-column:3;grid-row:1;text-align:right;line-height:18px}
.pc{font-size:12.500px;grid-column:3;grid-row:2;text-align:right}

/* center */
.center{width:1906px;flex:none;display:flex;flex-direction:column;border-left:1px solid #c80000}
.tools{height:21px;display:flex;align-items:center;border-bottom:1px solid #c80000;flex:none;font-size:12px}
.panel-ico{width:24px;height:20px;display:flex;align-items:center;justify-content:center;border-right:1px solid #c80000;padding-left:2px}
.periods{display:flex;gap:10px;padding-left:4px;white-space:nowrap}
.actions{margin-left:auto;display:flex;height:20px}
.actions span{width:35px;text-align:center;line-height:20px;border-left:1px solid #c80000}
.kline{display:block;width:1905px;height:765px;border-bottom:1px solid #c80000;flex:none;padding-bottom:0}
.volume{display:block;width:1905px;height:255px;border-bottom:1px solid #c80000;flex:none}
svg text{font-family:"Liberation Sans","Noto Sans CJK SC",sans-serif}
.dot{fill:none;stroke:#c80000;stroke-dasharray:1 3}
.axis{fill:none;stroke:#c80000}
.lab{font-size:12px;fill:#c8c8c8}
.lab-y{font-size:12px;fill:#ffff00}
.ax text{font-size:12px;fill:#ff3232}
.ax2 text{font-size:13px;fill:#ff3232}
.ax-w{font-size:12px;fill:#fff}
.ax-g text{font-size:12px;fill:#00e600}
.ax-y text{font-size:12px;fill:#c8c820}
.wick-u{fill:none;stroke:#ff3232}
.wick-d{fill:none;stroke:#54ffff}
.body-u{fill:none;stroke:#ff3232}
.body-d{fill:#54ffff}
.hl{fill:none;stroke:#ffff00;stroke-width:3}
.yl{fill:#ffff00}
.x100{fill:none;stroke:#c80000}
.mk{font-size:12px;fill:#e0e0e0}
.mk-r{font-size:13px;font-weight:700;fill:#f22}

.dates{display:flex;height:16px;border-bottom:1px solid #c80000;flex:none}
.dates-svg{display:block;width:1854px;height:15px}
.date{font-size:13px;fill:#ff3232}
.dline{width:51px;border-left:1px solid #c80000;text-align:center;font-size:13px;line-height:15px}
.inds{display:flex;height:17px;border-bottom:1px solid #c80000;flex:none;font-size:12px;line-height:16px;padding-left:1px}
.inds>span{padding:0 3px;border-right:1px solid #c80000;white-space:nowrap}
.ind-right{margin-left:auto;display:flex}
.ind-right span{border-left:1px solid #c80000;text-align:center}
.b1{width:35px}.b2{width:37px}.b3{width:25px}

.tbl{height:246px;flex:none;display:flex}
.rows{width:1891px;flex:none}
.tr{display:grid;grid-template-columns:20px 169px 58px 68px 52px 56px 92px 60px 76px 60px 68px 68px 60px 60px 61px 59px 76px 84px 69px 67px 60px 60px 60px 68px 60px 61px 59px 68px;height:22px;line-height:22px;font-size:14px;white-space:nowrap}
.tr>span{text-align:right}
.tr>.n{text-align:left;padding-left:17px;font-size:16px;color:#ffff78;position:relative}
.n b{font-size:15px}
.n small{font-size:11px;color:#a8a8a8;margin-left:7px}
.th{font-size:14px;color:#b8b8b8}
.th>.hname{font-size:14px;color:#b8b8b8;padding-left:19px}
.gear{display:flex;justify-content:flex-end;align-items:center;margin-right:-4px}
.dotm{position:absolute;left:160px;font-style:normal;font-size:10px}
.arr{font-style:normal;color:#f22;font-size:12px;margin-right:-4px}
.tscroll{width:14px;display:flex;flex-direction:column;margin-left:0;position:relative}
.tscroll .sbtn{flex:none}
.thumb{width:13px;height:38px;background:#333;margin-top:1px}
.tscroll .down{position:absolute;top:246px}

.ftabs{height:17px;flex:none;border-bottom:1px solid #c80000;display:flex;gap:0;padding-left:2px;overflow:hidden;margin-top:0}
.ftabs span{height:15px;line-height:15px;padding:0 8px;margin-right:-1.500px;font-size:13px;font-weight:700;color:#111;background:#7c7c7c;white-space:nowrap;clip-path:polygon(5px 0,100% 0,calc(100% - 5px) 100%,0 100%);flex:none}
.ftabs .on{background:#c00000;color:#fff;padding:0 11px}
.foot{height:18px;flex:none;border-bottom:1px solid #c80000;display:flex;font-size:13px;line-height:17px;padding-left:40px}
.foot-left{display:flex}
.foot-left span{padding:0 4.500px;border-right:1px solid #c80000;border-left:0;white-space:nowrap}
.foot-left span:first-child{border-left:1px solid #c80000}
.foot-right{margin-left:auto;display:flex}
.foot-right span{border-left:1px solid #c80000;padding:0 2px;white-space:nowrap;text-align:center}
.promo{width:87px;font-size:12px}
.f10{width:49px;font-size:12px}
.f10 em{color:#e8e800}
.sidebtn{width:50px;font-size:12px}

/* quote */
.quote{width:234px;flex:none;display:flex;flex-direction:column;border-left:1px solid #c80000;border-right:1px solid #c80000}
.qhead{height:27px;border-bottom:1px solid #c80000;display:flex;align-items:center;padding-left:16px;flex:none;position:relative}
.rmark{font-size:9px;line-height:10px;color:#ff3232;text-align:center;width:17px;margin-right:0}
.qhead b{color:#ffff30;font-size:14px;margin-right:4px}
.qname{color:#54e8ff;font-size:16px}
.book{flex:none;border-bottom:1px solid #c80000}
.asks{height:108px;padding-top:6px}
.bids{height:106px;padding-top:4px}
.brow{height:19px;display:flex;align-items:center;padding:0 3px 0 2px;position:relative}
.brow b{width:52px;color:#ff3232;font-size:14px;flex:none}
.brow .bar{height:4px;background:#ff3232;display:block}
.brow span{margin-left:auto;color:#c8c820;font-size:14px}
.stats{flex:none;border-bottom:1px solid #c80000;padding-left:2px}
.s5{height:97px;padding-top:1px}
.s3{height:61px;padding-top:1px}
.qrow{height:19px;display:grid;grid-template-columns:40px 73px 44px 73px;line-height:19px;font-size:16px}
.qrow span{white-space:nowrap}
.qrow span:nth-child(3){padding-left:4px}
.qrow b{font-size:14px;text-align:right;white-space:nowrap;font-weight:700}
.ttitle{height:20px;flex:none;border-bottom:1px solid #c80000;font-size:13px;line-height:20px;padding-left:1px}
.tline{display:block;width:232px;height:908px;flex:none;border-bottom:1px solid #c80000;overflow:visible}
.price{fill:none;stroke:#fff;stroke-width:1.200}
.avg{fill:none;stroke:#ffff00;stroke-width:1}
.vg{fill:none;stroke:#00e600;stroke-width:1.600}
.vr{fill:none;stroke:#ff3232;stroke-width:1.600}
.vw{fill:none;stroke:#fff;stroke-width:1.300}
.tgap{height:9px;flex:none;border-bottom:1px solid #c80000}
.ttabs{display:flex;flex:1;border-bottom:1px solid #c80000;font-size:14px;line-height:17px}
.ttabs span{width:29px;text-align:center;border-right:1px solid #c80000}
.ttabs span:last-child{border-right:0;flex:1}

/* info */
.info{flex:1;display:flex;flex-direction:column;font-size:14px;color:#a8bcd0;padding:0 3px;min-width:0}
.trade{height:56px;flex:none;margin:0 -3px;border-bottom:1px solid #c80000;padding:5px 0 0 26px;display:grid;grid-template-columns:70px 70px;grid-template-rows:20px 21px;gap:4px 20px}
.tb{border:1px solid;text-align:center;font-size:14px;line-height:18px}
.buy{border-color:#e02020;color:#ff3232}
.sell{border-color:#20d020;color:#20e020}
.neu{border-color:#c0c0c0;color:#d0d0d0}
.fin{height:123px;flex:none;margin:0 -3px}
.fhead{display:flex;height:22px;align-items:center;padding-left:6px;color:#b8b8b8;white-space:nowrap;padding-top:1px}
.fhead span{margin-right:7px}
.fcode{color:#a0b0c0;width:63px;margin-right:7px}
.fchart{display:block;width:219px;height:101px}
.fa text{font-size:13px;fill:#c0ccd8;text-anchor:end}
.ft{font-size:13px;fill:#c0c0c0}
.fax{fill:none;stroke:#444}
.fb{fill:#ff4000}
.fy text{font-size:13px;fill:#c0ccd8}

.sec{padding:4px 0 2px;border-bottom:1px solid #333;flex:none}
.s1{padding:4px 0 0}
.chev{height:10px;line-height:9px;text-align:center;font-size:11px;color:#a0a0a0;margin-left:-3px}
.tight{padding-bottom:0}
.kv{display:grid;grid-template-columns:40px 64px 46px 63px;height:21px;line-height:21px;white-space:nowrap}
.kv.wide{grid-template-columns:40px 61px 46px 66px}
.l{color:#7d7d7d;white-space:nowrap}
.l2{padding-left:3px}
.l3{padding-left:0}
.v{justify-self:end;white-space:nowrap}
.vv{white-space:nowrap}
sup{font-size:8px;color:#7d7d7d;line-height:0;vertical-align:6px;margin-left:3px}
.row3{display:grid;grid-template-columns:70px 62px 81px;height:21px;line-height:21px}
.row3 .v{text-align:right}
.row3.hot{color:#ff8c00}
.row2{display:grid;grid-template-columns:47px 1fr;height:21px;line-height:21px;white-space:nowrap}
.r2w{grid-template-columns:37px 1fr}
.txt{line-height:21px;white-space:nowrap}
.txt div{height:21px}
.vision{height:73px;padding:3px 0 0}
.vhead{display:flex;justify-content:space-between;height:20px;line-height:20px}
.vhead{color:#c0c0c0}
.vtabs{display:flex;gap:6px;padding-right:5px}
.vtabs span{width:28px}
.vcount{display:flex;justify-content:space-between;height:19px;line-height:18px}
.bull{color:#dc2340}.bear{color:#4caf35}
.vbar{display:flex;height:18px;color:#fff}
.vred{width:149px;background:#dc2340;border-radius:9px 0 0 9px;clip-path:polygon(0 0,100% 0,calc(100% - 4px) 100%,0 100%);display:flex;align-items:center;gap:3px;font-size:13px;padding-left:0}
.vgreen{flex:1;background:#4caf35;border-radius:0 9px 9px 0;clip-path:polygon(4px 0,100% 0,100% 100%,0 100%);display:flex;align-items:center;justify-content:flex-end;gap:3px;font-size:13px}
.thumb-ico{flex:none}
.row4{display:grid;grid-template-columns:45px 36px 85px 47px;height:21px;line-height:21px;white-space:nowrap}
.sectabs{display:flex;padding:3px 0 3px 19px;gap:7px;line-height:21px;height:28px;color:#c0c0c0;white-space:nowrap}
.sectabs span{flex:none}
.itag{margin-left:8px}
.fore{padding:3px 0 1px}
.last{padding-bottom:2px}
.rate{display:grid;grid-template-columns:111px 46px 56px;height:21px;line-height:21px;white-space:nowrap}
.dashes{text-align:right}

/* overlays */
.expand{position:absolute;left:187px;top:1340px;display:flex;gap:5px;font-size:13px;line-height:16px}
.extxt{color:#c0c0c0}
.watermark{position:absolute;left:2410px;top:14px;font-size:33px;font-weight:700;letter-spacing:0;color:rgba(130,130,130,.6);line-height:42px;font-family:"Noto Sans CJK SC",sans-serif;white-space:nowrap}
.sub{position:absolute;font-family:"Noto Sans CJK SC",sans-serif;font-weight:700;font-size:32px;line-height:40px;color:#0e86d4;text-shadow:1px 1px 1px #03314f,0 0 2px #04283f;white-space:nowrap}
.sub1{left:949px;top:1276px}
.sub2{left:1700px;top:1334px;color:#0f7fcf}
.wt{color:#e8ffff;text-shadow:0 0 3px #30c8e8}
.net{position:absolute;left:2388px;top:1253px;width:118px;height:60px}
.net-pill{position:absolute;left:0;top:9px;width:100px;height:41px;background:rgba(50,60,68,.75);border-radius:20px;color:#d8d8d8;font-size:12px}
.net-pill span{position:absolute}
.nu{left:9px;top:1px;color:#2a9ce0;font-weight:700}
.nd{left:9px;top:21px;color:#20b030;font-weight:700}
.nv{left:32px;top:2px}
.nv2{top:23px}
.nv small{font-size:9px;color:#a0a8b0;margin-left:1px}
.net-dial{position:absolute;left:58px;top:0}
.dial{font-size:24px;fill:#f0f0f0}
.dialp{font-size:10px}
.ad{position:absolute;left:2382px;top:1348px;width:178px;height:11px;display:flex;align-items:flex-end}
.ad svg{flex:none}
.adbar{flex:1;height:7px;background:#f2f5fb}
```
